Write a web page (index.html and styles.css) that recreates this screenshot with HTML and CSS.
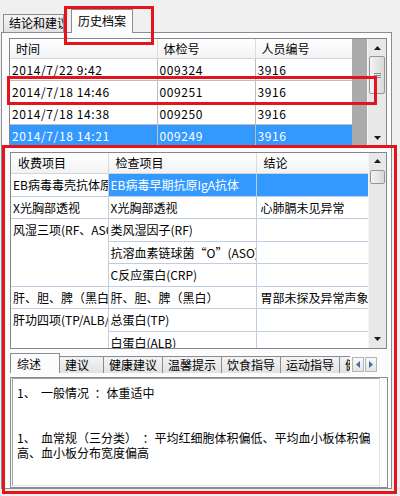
FILE: index.html
```html
<!DOCTYPE html>
<html lang="zh-CN">
<head>
  <meta charset="UTF-8" />
  <title>历史档案</title>
  <link rel="stylesheet" href="styles.css">
</head>
<body>

  <!-- 上方页签 -->
  <div class="tabs">
    <div class="tab">结论和建议</div>
    <div class="tab on">历史档案</div>
  </div>

  <div class="panel">

    <!-- 历史记录列表 -->
    <div class="grid grid-his">
      <div class="gbody">
        <table class="his">
          <colgroup><col class="c-time"><col class="c-no"><col class="c-pid"></colgroup>
          <tr><th>时间</th><th>体检号</th><th>人员编号</th></tr>
          <tr><td>2014/7/22 9:42</td><td>009324</td><td>3916</td></tr>
          <tr><td>2014/7/18 14:46</td><td>009251</td><td>3916</td></tr>
          <tr><td>2014/7/18 14:38</td><td>009250</td><td>3916</td></tr>
          <tr class="sel"><td>2014/7/18 14:21</td><td>009249</td><td>3916</td></tr>
        </table>
      </div>
      <div class="gfill"></div>
      <div class="vscroll">
        <div class="sb-btn"><svg width="7" height="4" viewBox="0 0 7 4"><path d="M0 4L3.5 0L7 4Z"/></svg></div>
        <div class="sb-track"><div class="sb-thumb"><i></i><i></i><i></i></div></div>
        <div class="sb-btn"><svg width="7" height="4" viewBox="0 0 7 4"><path d="M0 0L7 0L3.5 4Z"/></svg></div>
      </div>
    </div>

    <!-- 检查项目明细 -->
    <div class="grid grid-items">
      <div class="gbody">
        <table class="items">
          <colgroup><col class="c-fee"><col class="c-item"><col class="c-res"></colgroup>
          <tr><th>收费项目</th><th>检查项目</th><th>结论</th></tr>
          <tr><td>EB病毒毒壳抗体原</td><td class="sel">EB病毒早期抗原IgA抗体</td><td class="sel"></td></tr>
          <tr><td>X光胸部透视</td><td>X光胸部透视</td><td class="res">心肺膈未见异常</td></tr>
          <tr><td rowspan="3" class="merge">风湿三项(RF、ASO、CRP)</td><td>类风湿因子(RF)</td><td></td></tr>
          <tr><td>抗溶血素链球菌“O”(ASO)</td><td></td></tr>
          <tr><td>C反应蛋白(CRP)</td><td></td></tr>
          <tr><td>肝、胆、脾（黑白超）</td><td>肝、胆、脾（黑白）</td><td class="res">胃部未探及异常声象</td></tr>
          <tr><td rowspan="3" class="merge">肝功四项(TP/ALB/GLB/A/G)</td><td>总蛋白(TP)</td><td></td></tr>
          <tr><td>白蛋白(ALB)</td><td></td></tr>
          <tr><td>球蛋白(GLB)</td><td></td></tr>
        </table>
      </div>
      <div class="vscroll">
        <div class="sb-btn"><svg width="7" height="4" viewBox="0 0 7 4"><path d="M0 4L3.5 0L7 4Z"/></svg></div>
        <div class="sb-track"><div class="sb-thumb small"></div></div>
        <div class="sb-btn"><svg width="7" height="4" viewBox="0 0 7 4"><path d="M0 0L7 0L3.5 4Z"/></svg></div>
      </div>
    </div>

    <!-- 下方页签 -->
    <div class="ltabs">
      <div class="lstrip">
        <div class="ltab on">综述</div>
        <div class="ltab">建议</div>
        <div class="ltab">健康建议</div>
        <div class="ltab">温馨提示</div>
        <div class="ltab">饮食指导</div>
        <div class="ltab">运动指导</div>
        <div class="ltab">健康处方</div>
      </div>
      <div class="larrows">
        <div class="abtn"><svg width="4" height="7" viewBox="0 0 4 7"><path d="M4 0L0 3.5L4 7Z"/></svg></div>
        <div class="abtn"><svg width="4" height="7" viewBox="0 0 4 7"><path d="M0 0L4 3.5L0 7Z"/></svg></div>
      </div>
    </div>
    <div class="lpage">
      <div class="memo">1、  一般情况  ：体重适中


1、  血常规（三分类）  ：平均红细胞体积偏低、平均血小板体积偏
高、血小板分布宽度偏高</div>
    </div>
  </div>

  <!-- 红色标注框 -->
  <div class="mark mark-tab"></div>
  <div class="mark mark-row"></div>
  <div class="mark mark-detail"></div>

</body>
</html>
```

FILE: styles.css
```css
* { box-sizing: border-box; }
body {
  margin: 0;
  width: 400px;
  height: 496px;
  overflow: hidden;
  position: relative;
  background: #f0f0f0;
  color: #000;
  font-family: "Noto Sans CJK SC", "Liberation Sans", sans-serif;
  font-size: 12px;
}

/* top tabs */
.tabs {
  display: flex;
  align-items: flex-end;
  height: 32px;
  padding-left: 3px;
}
.tab {
  width: 61px;
  height: 18px;
  padding-left: 5px;
  line-height: 16px;
  border: 1px solid #898c95;
  border-bottom: none;
  background: linear-gradient(#f4f4f4, #e2e2e2);
  white-space: nowrap;
  overflow: hidden;
}
.tab.on {
  width: 62px;
  height: 24px;
  margin-left: 7px;
  margin-bottom: -1px;
  padding-left: 6px;
  line-height: 22px;
  background: #fcfcfc;
  position: relative;
  z-index: 1;
}

.panel {
  width: 391px;
  height: 457px;
  margin-left: 1px;
  border: 1px solid #898c95;
  background: #fcfcfc;
  padding: 5px 0 0 7px;
  display: flex;
  flex-direction: column;
  gap: 4px;
}

/* grids */
.grid {
  display: flex;
  border: 1px solid #828790;
  background: #fff;
}
.grid-his { width: 378px; height: 110px; }
.grid-items { width: 377px; height: 197px; margin-left: 1px; }
.gbody { overflow: hidden; }
.grid-his .gbody { width: 342px; }
.grid-items .gbody { width: 357px; }
.gfill { width: 15px; background: #ababab; }

table {
  table-layout: fixed;
  border-collapse: collapse;
  font-size: 12px;
}
.his { width: 342px; }
.items { width: 357px; }
.c-time { width: 147px; }
.c-no { width: 98px; }
.c-pid { width: 97px; }
.c-fee { width: 97px; }
.c-item { width: 148px; }
.c-res { width: 112px; }

th {
  height: 19px;
  padding: 0 0 0 6px;
  font-weight: normal;
  text-align: left;
  background: linear-gradient(#ffffff, #f1f2f4);
  border-right: 1px solid #dcdcdc;
  border-bottom: 1px solid #d5d5d5;
  white-space: nowrap;
  overflow: hidden;
}
td {
  padding: 0 2px;
  white-space: nowrap;
  overflow: hidden;
  vertical-align: middle;
}
.his td {
  height: 22px;
  letter-spacing: 0.6px;
  border-right: 1px solid #bdbdbd;
  border-bottom: 1px solid #bdbdbd;
}
.his tr.sel td { background: #3399ff; color: #fff; }

.items th { height: 21px; padding-left: 7px; }
.items td {
  height: 22.5px;
  border-right: 1px solid #bfcde3;
  border-bottom: 1px solid #bfcde3;
}
.items td.sel { background: #3399ff; color: #fff; }
.items td.res { padding-left: 4px; }
.items td.merge { vertical-align: top; line-height: 22px; }

/* scrollbar */
.vscroll {
  width: 19px;
  display: flex;
  flex-direction: column;
  background: #e8e8e8;
  border-left: 1px solid #f4f4f4;
}
.grid-items .vscroll { width: 18px; }
.sb-btn {
  height: 17px;
  display: flex;
  align-items: center;
  justify-content: center;
  fill: #1a1a1a;
}
.sb-track { flex: 1; padding: 0 1px; }
.sb-thumb {
  height: 38px;
  border: 1px solid #979797;
  border-radius: 2px;
  background: linear-gradient(90deg, #f3f3f3, #d9d9d9);
  display: flex;
  flex-direction: column;
  align-items: center;
  justify-content: center;
  gap: 1px;
}
.sb-thumb i {
  display: block;
  width: 7px;
  height: 1px;
  background: #8a8a8a;
}
.sb-thumb.small { height: 14px; }

/* bottom tabs */
.ltabs {
  display: flex;
  align-items: flex-end;
  height: 20px;
  width: 378px;
  margin-left: 1px;
}
.lstrip {
  display: flex;
  align-items: flex-end;
  width: 340px;
  height: 20px;
  overflow: hidden;
}
.ltab {
  flex: none;
  min-width: 44px;
  height: 17px;
  padding: 0 5px;
  line-height: 15px;
  border: 1px solid #898c95;
  border-bottom: none;
  border-left: none;
  background: linear-gradient(#f4f4f4, #e2e2e2);
  white-space: nowrap;
}
.ltab.on {
  width: 50px;
  height: 21px;
  margin-bottom: -1px;
  padding-left: 6px;
  line-height: 19px;
  border-left: 1px solid #898c95;
  background: #fcfcfc;
  position: relative;
  z-index: 1;
}
.larrows {
  display: flex;
  gap: 1px;
  margin: 0 0 1px 2px;
}
.abtn {
  width: 12px;
  height: 15px;
  display: flex;
  align-items: center;
  justify-content: center;
  border: 1px solid #b5b5b5;
  background: linear-gradient(#fafafa, #e4e4e4);
  fill: #4d6a9a;
}

.lpage {
  width: 378px;
  height: 115px;
  margin-left: 1px;
  border: 1px solid #898c95;
  background: #fcfcfc;
  padding: 0 7px 1px 1px;
}
.memo {
  height: 100%;
  background: #fff;
  border: 1px solid #a0a0a0;
  border-right-color: #e3e3e3;
  border-bottom-color: #e3e3e3;
  padding: 6px 4px;
  line-height: 15px;
  white-space: pre-wrap;
  overflow: hidden;
}

/* red annotation boxes */
.mark {
  position: absolute;
  border: 3px solid #e5141c;
  z-index: 5;
}
.mark-tab { left: 64px; top: 6px; width: 90px; height: 39px; }
.mark-row { left: 7px; top: 76px; width: 370px; height: 29px; }
.mark-detail { left: 2px; top: 145px; width: 395px; height: 349px; }
```
